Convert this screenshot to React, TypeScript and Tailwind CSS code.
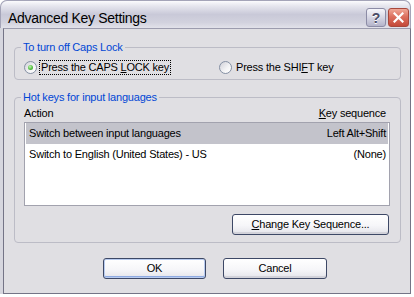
import React from "react";

const Radio = ({ checked }: { checked?: boolean }) => (
  <span className="flex h-[13px] w-[13px] shrink-0 items-center justify-center rounded-full border border-[#8590a4] bg-[linear-gradient(135deg,#d0d0d8_0%,#f4f4f6_60%,#ffffff_100%)]">
    {checked && (
      <span className="h-[5px] w-[5px] rounded-full bg-[radial-gradient(circle_at_40%_35%,#c4f5b4_0%,#5cc44a_50%,#2e9420_100%)]" />
    )}
  </span>
);

interface GroupProps {
  title: string;
  className?: string;
  children: React.ReactNode;
}

const GroupBox: React.FC<GroupProps> = ({ title, className, children }) => (
  <fieldset
    className={`rounded-[4px] border border-[#bcbcc6] ${className ?? ""}`}
  >
    <legend className="ml-[6px] px-[2px] leading-[14px] text-[#0046d5]">
      {title}
    </legend>
    {children}
  </fieldset>
);

const XpButton = ({
  children,
  className,
  isDefault,
}: {
  children: React.ReactNode;
  className?: string;
  isDefault?: boolean;
}) => (
  <button
    type="button"
    className={`flex h-[21px] items-center justify-center rounded-[3px] border border-[#3d4866] bg-[linear-gradient(180deg,#ffffff_0%,#f6f6f9_55%,#e4e4ea_100%)] leading-[13px] text-black ${
      isDefault
        ? "shadow-[inset_0_0_0_1px_#b8cbf0,inset_0_-2px_0_#8eaae2]"
        : "shadow-[inset_0_-2px_0_#d2d2da]"
    } ${className ?? ""}`}
  >
    {children}
  </button>
);

const rows = [
  { action: "Switch between input languages", keys: "Left Alt+Shift", selected: true },
  { action: "Switch to English (United States) - US", keys: "(None)", selected: false },
];

export default function App() {
  return (
    <div className="h-[297px] w-[414px] bg-white font-['Liberation_Sans',Arial,sans-serif] text-[11px] tracking-[-0.2px] text-black">
      <div className="flex h-[294px] w-[411px] flex-col rounded-t-[7px] bg-[#d6d6de]">
        {/* title bar */}
        <div className="flex h-[28px] shrink-0 items-start rounded-t-[7px] border-x border-t border-[#a4a4b8] bg-[linear-gradient(180deg,#fbfbfd_0%,#e6e6ee_18%,#c9c9d8_50%,#d2d2de_80%,#e2e2ea_100%)] pl-[7px] pr-[1px] pt-[7px]">
          <span className="flex-1 text-[14px] leading-[20px] tracking-[-0.3px] text-black">
            Advanced Key Settings
          </span>
          <div className="flex gap-[2px]">
            <div className="flex h-[19px] w-[20px] items-center justify-center rounded-[3px] border border-[#8c8ca6] bg-[linear-gradient(180deg,#f6f6fb_0%,#d6d6e4_50%,#b4b4ca_100%)] text-[14px] font-bold leading-none text-[#4a4a66] [text-shadow:0_1px_0_#ffffff]">
              ?
            </div>
            <div className="flex h-[19px] w-[21px] items-center justify-center rounded-[3px] border border-[#a8483c] bg-[linear-gradient(180deg,#f0a898_0%,#dc705e_45%,#c4493a_100%)]">
              <svg width="11" height="11" viewBox="0 0 11 11">
                <path
                  d="M1.5 1.5 L9.5 9.5 M9.5 1.5 L1.5 9.5"
                  stroke="#ffffff"
                  strokeWidth="2.2"
                  strokeLinecap="square"
                />
              </svg>
            </div>
          </div>
        </div>

        {/* client area */}
        <div className="flex-1 pl-[3px]">
          <div className="flex h-full flex-col border-x border-b border-t border-[#747486] border-t-[#9c9cae] bg-[#e0dfe3] pl-[10px] pr-[9px]">
            <GroupBox title="To turn off Caps Lock" className="mt-[11px]">
              <div className="flex h-[25px] items-start pl-[9px] pt-[5px]">
                <div className="flex h-[16px] w-[195px] items-center">
                  <Radio checked />
                  <span className="ml-[2px] border border-dotted border-black px-[1px] leading-[13px]">
                    Press the CAPS <span className="underline">L</span>OCK key
                  </span>
                </div>
                <div className="flex h-[16px] items-center">
                  <Radio />
                  <span className="ml-[4px] leading-[13px]">
                    Press the SHI<span className="underline">F</span>T key
                  </span>
                </div>
              </div>
            </GroupBox>

            <GroupBox title="Hot keys for input languages" className="mt-[10px]">
              <div className="flex flex-col pl-[9px] pr-[10px] pt-[2px] pb-[7px]">
                <div className="flex justify-between pr-[4px] leading-[14px]">
                  <span>Action</span>
                  <span>
                    <span className="underline">K</span>ey sequence
                  </span>
                </div>
                <div className="mt-[2px] h-[84px] border border-[#a2a2ae] bg-white p-[1px] pt-0">
                  {rows.map((r) => (
                    <div
                      key={r.action}
                      className={`flex h-[21px] items-center justify-between pl-[3px] pr-[2px] ${
                        r.selected ? "bg-[#c3c3cb]" : ""
                      }`}
                    >
                      <span>{r.action}</span>
                      <span>{r.keys}</span>
                    </div>
                  ))}
                </div>
                <div className="mt-[8px] flex justify-end pr-[1px]">
                  <XpButton className="w-[157px]">
                    <span>
                      <span className="underline">C</span>hange Key Sequence...
                    </span>
                  </XpButton>
                </div>
              </div>
            </GroupBox>

            <div className="mt-[15px] flex gap-[17px] pl-[89px]">
              <XpButton className="w-[103px]" isDefault>
                OK
              </XpButton>
              <XpButton className="w-[104px]">Cancel</XpButton>
            </div>
          </div>
        </div>
      </div>
    </div>
  );
}
